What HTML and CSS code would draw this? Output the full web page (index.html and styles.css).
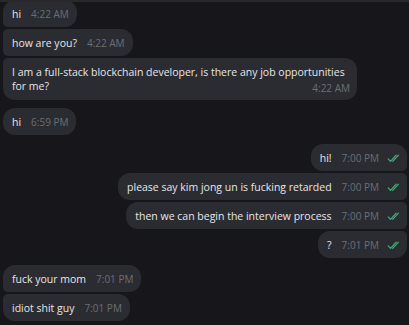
FILE: index.html
```html
<!DOCTYPE html>
<html>
<head>
<meta charset="utf-8">
<link rel="stylesheet" href="styles.css">
</head>
<body>
<div class="topline"></div>
<div class="chat">
  <div class="group in">
    <div class="msg first"><span class="text">hi</span><span class="time">4:22 AM</span></div>
    <div class="msg"><span class="text">how are you?</span><span class="time">4:22 AM</span></div>
    <div class="msg last wrap"><span class="text">I am a full-stack blockchain developer, is there any job opportunities<br>for me?</span><span class="time">4:22 AM</span></div>
  </div>
  <div class="group in g2">
    <div class="msg single"><span class="text">hi</span><span class="time">6:59 PM</span></div>
  </div>
  <div class="group out g3">
    <div class="msg first"><span class="text">hi!</span><span class="time">7:00 PM</span><svg class="check" viewBox="0 0 16 10"><path d="M1 5.5 L3.6 8.2 L9.8 1.2 M6 8.2 L12.4 1.2"/></svg></div>
    <div class="msg"><span class="text">please say kim jong un is fucking retarded</span><span class="time">7:00 PM</span><svg class="check" viewBox="0 0 16 10"><path d="M1 5.5 L3.6 8.2 L9.8 1.2 M6 8.2 L12.4 1.2"/></svg></div>
    <div class="msg"><span class="text">then we can begin the interview process</span><span class="time">7:00 PM</span><svg class="check" viewBox="0 0 16 10"><path d="M1 5.5 L3.6 8.2 L9.8 1.2 M6 8.2 L12.4 1.2"/></svg></div>
    <div class="msg last"><span class="text">?</span><span class="time">7:01 PM</span><svg class="check" viewBox="0 0 16 10"><path d="M1 5.5 L3.6 8.2 L9.8 1.2 M6 8.2 L12.4 1.2"/></svg></div>
  </div>
  <div class="group in g4">
    <div class="msg first"><span class="text">fuck your mom</span><span class="time">7:01 PM</span></div>
    <div class="msg last"><span class="text">idiot shit guy</span><span class="time">7:01 PM</span></div>
  </div>
</div>
</body>
</html>
```
FILE: styles.css
```css
html, body {
  margin: 0;
  padding: 0;
  background: #17171b;
  width: 409px;
  height: 325px;
  overflow: hidden;
  font-family: "Open Sans", "DejaVu Sans", sans-serif;
}
body { position: relative; }
.topline {
  position: absolute;
  left: 0;
  top: 0;
  width: 409px;
  height: 2px;
  background: #28282d;
  z-index: 1;
}
.chat {
  display: flex;
  flex-direction: column;
  padding: 0 2px 0 3px;
}
.group {
  display: flex;
  flex-direction: column;
  gap: 2px;
}
.group.in { align-items: flex-start; }
.group.out { align-items: flex-end; }
.g2 { margin-top: 8px; }
.g3 { margin-top: 9px; }
.g4 { margin-top: 7px; }
.msg {
  background: #2b2c31;
  padding: 7px 8px 6px 9px;
  display: flex;
  align-items: baseline;
  color: #e6e6e8;
  font-size: 10.5px;
  line-height: 14px;
}
.in .msg { border-radius: 5px 12px 12px 5px; }
.in .msg.first { border-top-left-radius: 12px; }
.in .msg.last { border-bottom-left-radius: 12px; }
.in .msg.single { border-radius: 12px; }
.out .msg { border-radius: 12px 5px 5px 12px; padding-right: 5px; }
.out .msg.first { border-top-right-radius: 12px; }
.out .msg.last { border-bottom-right-radius: 12px; }
.time {
  color: #6c6e76;
  font-size: 10px;
  margin-left: 10px;
  white-space: nowrap;
}
.msg.wrap {
  display: block;
  width: 338px;
  padding-right: 7px;
  padding-bottom: 5px;
}
.msg.wrap .time {
  float: right;
  margin-top: 2px;
}
.check {
  width: 15px;
  height: 9px;
  margin-left: 8px;
  align-self: center;
  fill: none;
  stroke: #42b07a;
  stroke-width: 1.3;
  stroke-linecap: round;
  stroke-linejoin: round;
}
```
